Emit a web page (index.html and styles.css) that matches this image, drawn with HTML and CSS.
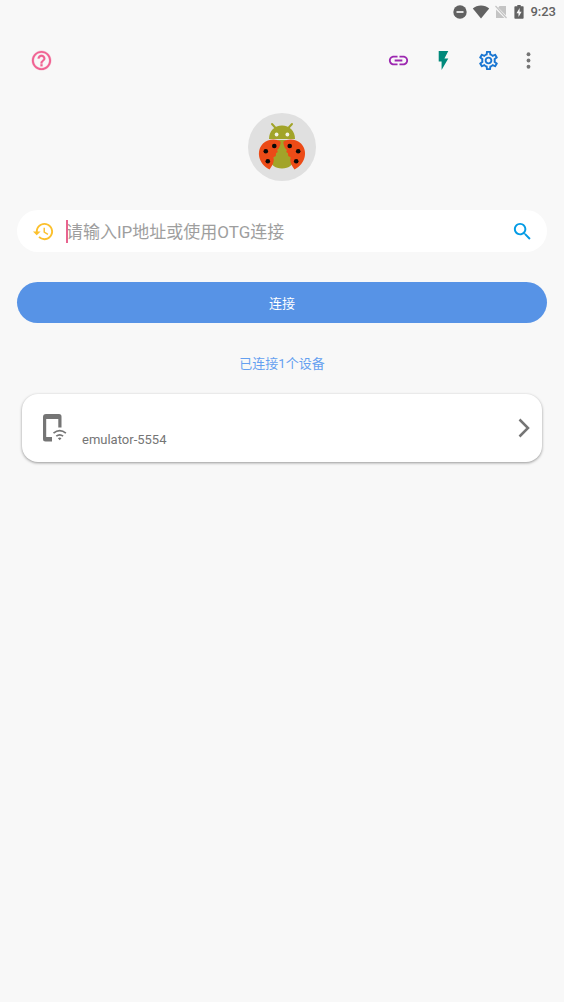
FILE: index.html
```html
<!DOCTYPE html>
<html lang="zh-CN">
<head>
<meta charset="utf-8">
<meta name="viewport" content="width=device-width, initial-scale=1">
<title>ADB</title>
<link rel="stylesheet" href="styles.css">
</head>
<body>
<div class="status-bar">
  <svg class="status-icon" width="14" height="14" viewBox="0 0 14 14" aria-hidden="true"><circle cx="7" cy="7" r="6.7" fill="#626262"/><path d="M3.5 7h7" stroke="#f7f7f7" stroke-width="1.700"/></svg>
  <svg class="status-icon" width="18" height="14" viewBox="0 0 18 14" aria-hidden="true"><path d="M9 13.600.8 3.400C3 1.500 5.800.5 9 .5s6 1 8.200 2.900z" fill="#626262"/></svg>
  <svg class="status-icon sim" width="12" height="14" viewBox="0 0 12 14" aria-hidden="true"><path d="M4.600 1H11v9.600L3.200 2.500zM1 4.500 9.500 13H1z" fill="#c4c4c4"/><path d="m.5 1 11 12" stroke="#c4c4c4" stroke-width="1.200"/></svg>
  <svg class="status-icon battery" width="10" height="14" viewBox="0 0 10 14" aria-hidden="true"><path d="M3.300 0h3.400v1.300H9q.6 0 .6.700v11q0 .8-.7.800H1.100q-.7 0-.7-.8V2q0-.7.7-.7h2.200z" fill="#626262"/><path d="M5.600 3 2.500 8.200h2V12l3.100-5.200h-2z" fill="#f7f7f7"/></svg>
  <time class="clock">9:23</time>
</div>

<header class="toolbar">
  <button class="icon-button help" type="button" aria-label="帮助">
    <svg class="icon" viewBox="0 0 24 24"><path d="M11 18h2v-2h-2v2zm1-16C6.480 2 2 6.480 2 12s4.480 10 10 10 10-4.480 10-10S17.520 2 12 2zm0 18c-4.410 0-8-3.590-8-8s3.590-8 8-8 8 3.590 8 8-3.590 8-8 8zm0-14c-2.210 0-4 1.790-4 4h2c0-1.100.9-2 2-2s2 .9 2 2c0 2-3 1.750-3 5h2c0-2.250 3-2.500 3-5 0-2.210-1.790-4-4-4z" stroke="currentColor" stroke-width=".3"/></svg>
  </button>
  <button class="icon-button link" type="button" aria-label="链接">
    <svg class="icon" viewBox="0 0 24 24"><path d="M3.900 12c0-1.710 1.390-3.100 3.100-3.100h4V7H7c-2.760 0-5 2.240-5 5s2.240 5 5 5h4v-1.900H7c-1.710 0-3.100-1.390-3.100-3.100zM8 13h8v-2H8v2zm9-6h-4v1.900h4c1.710 0 3.100 1.390 3.100 3.100s-1.390 3.100-3.100 3.100h-4V17h4c2.760 0 5-2.240 5-5s-2.240-5-5-5z"/></svg>
  </button>
  <button class="icon-button flash" type="button" aria-label="闪电">
    <svg class="icon" viewBox="0 0 24 24"><path d="M7 2v11h3v9l7-12h-4l4-8z"/></svg>
  </button>
  <button class="icon-button settings" type="button" aria-label="设置">
    <svg class="icon" viewBox="0 0 24 24"><path d="M19.430 12.980c.04-.32.07-.64.07-.98 0-.34-.03-.66-.07-.98l2.110-1.650c.19-.15.24-.42.12-.64l-2-3.460c-.09-.16-.26-.25-.44-.25-.06 0-.12.010-.17.030l-2.490 1c-.52-.4-1.080-.73-1.690-.98l-.38-2.650C14.460 2.180 14.250 2 14 2h-4c-.25 0-.46.180-.49.420l-.38 2.650c-.61.250-1.170.590-1.690.980l-2.490-1c-.06-.02-.12-.03-.18-.03-.17 0-.34.090-.43.250l-2 3.460c-.13.220-.07.490.12.640l2.110 1.650c-.04.320-.07.650-.07.980 0 .330.030.660.070.980l-2.110 1.650c-.19.150-.24.420-.12.640l2 3.460c.09.160.26.250.44.250.06 0 .12-.01.17-.03l2.490-1c.52.400 1.080.730 1.690.980l.38 2.650c.03.240.24.420.49.420h4c.25 0 .46-.18.49-.42l.38-2.650c.61-.25 1.170-.59 1.690-.98l2.490 1c.06.020.12.030.18.030.17 0 .34-.09.43-.25l2-3.460c.12-.22.070-.49-.12-.64l-2.110-1.650zm-1.980-1.710c.04.310.05.520.05.730 0 .210-.02.430-.05.730l-.14 1.130.89.700 1.080.840-.7 1.210-1.270-.51-1.040-.42-.9.680c-.43.320-.84.560-1.250.730l-1.060.430-.16 1.130-.2 1.350h-1.400l-.19-1.350-.16-1.130-1.060-.43c-.43-.18-.83-.41-1.230-.71l-.91-.7-1.060.430-1.270.510-.7-1.210 1.080-.84.89-.7-.14-1.130c-.03-.31-.05-.54-.05-.74s.02-.43.05-.73l.14-1.130-.89-.7-1.080-.84.700-1.210 1.270.510 1.040.420.900-.68c.43-.32.840-.56 1.250-.73l1.060-.43.160-1.130.200-1.350h1.390l.19 1.350.16 1.130 1.060.430c.43.180.830.410 1.230.710l.91.700 1.060-.43 1.270-.51.700 1.210-1.070.850-.89.700.14 1.130zM12 8c-2.210 0-4 1.790-4 4s1.790 4 4 4 4-1.790 4-4-1.790-4-4-4zm0 6c-1.100 0-2-.9-2-2s.9-2 2-2 2 .9 2 2-.9 2-2 2z"/></svg>
  </button>
  <button class="icon-button more" type="button" aria-label="更多">
    <svg class="icon" viewBox="0 0 24 24"><circle cx="12" cy="5.500" r="2"/><circle cx="12" cy="12" r="2"/><circle cx="12" cy="18.500" r="2"/></svg>
  </button>
</header>

<main class="content">
  <svg class="logo" viewBox="0 0 68 68" role="img" aria-label="瓢虫">
    <circle cx="34" cy="34" r="34" fill="#e0e0e0"/>
    <path d="m24 11 4.500 5m15.500-5-4.500 5" stroke="#a2a429" stroke-width="2" stroke-linecap="round"/>
    <path d="M21 26c0-8 5.500-13.500 13-13.500S47 18 47 26z" fill="#a2a429"/>
    <circle cx="28.600" cy="21.500" r="1.900" fill="#f4f4e6"/><circle cx="39.400" cy="21.500" r="1.900" fill="#f4f4e6"/>
    <path d="M30 27h8c1 4 8 13 8 18 0 6.500-5 10.500-12 10.500S22 51.500 22 45c0-5 7-14 8-18z" fill="#a2a429"/>
    <path id="wing" d="M32.500 28.500C28.500 25.500 20 25.500 15 30.500 8 37.500 10 50.500 21.500 56.500c2.500-3.500 4-6 4.300-9.500l-.4-2.800 2.400-1.200.2-2.700 1.800-1.300-.7-2 1.900-2c.8-2 2-4.500 1.500-6.500z" fill="#ec4b17"/>
    <use href="#wing" transform="matrix(-1 0 0 1 68 0)"/>
    <g fill="#080808"><circle cx="26.300" cy="33" r="2.300"/><circle cx="17.800" cy="38.200" r="2.300"/><circle cx="19.800" cy="48.300" r="2.300"/><circle cx="41.700" cy="33" r="2.300"/><circle cx="50.200" cy="38.200" r="2.300"/><circle cx="48.200" cy="48.300" r="2.300"/></g>
  </svg>

  <form class="connect-form">
    <div class="search">
      <button class="icon-button history" type="button" aria-label="历史记录">
        <svg class="icon" viewBox="0 0 24 24"><path d="M13 3c-4.970 0-9 4.030-9 9H1l3.890 3.890.07.140L9 12H6c0-3.870 3.130-7 7-7s7 3.130 7 7-3.130 7-7 7c-1.930 0-3.680-.79-4.940-2.060l-1.420 1.420C8.270 19.990 10.510 21 13 21c4.970 0 9-4.030 9-9s-4.030-9-9-9zm-1 5v5l4.280 2.540.72-1.210-3.500-2.080V8z"/></svg>
      </button>
      <div class="field">
        <input class="address" type="text" aria-label="IP地址" placeholder="请输入IP地址或使用OTG连接">
        <span class="caret"></span>
      </div>
      <button class="icon-button find" type="button" aria-label="搜索">
        <svg class="icon" viewBox="0 0 24 24"><path d="M15.500 14h-.79l-.28-.27C15.410 12.590 16 11.110 16 9.500 16 5.910 13.090 3 9.500 3S3 5.910 3 9.500 5.910 16 9.500 16c1.610 0 3.090-.59 4.230-1.570l.27.280v.79l5 4.990L20.490 19l-4.990-5zm-6 0C7.010 14 5 11.990 5 9.500S7.010 5 9.500 5 14 7.010 14 9.500 11.990 14 9.500 14z"/></svg>
      </button>
    </div>
    <button class="connect" type="submit">连接</button>
  </form>

  <p class="summary">已连接1个设备</p>

  <button class="device" type="button">
    <svg class="device-icon" width="24" height="28" viewBox="0 0 24 28" fill="none" stroke="#757575" aria-hidden="true"><path d="M3 0h13q2.500 0 2.500 2.500V13.500h-3.200V5H3.200v18H9v4.500H2.500Q0 27.500 0 25V3Q0 0 3 0z" fill="#757575" stroke="none"/><path d="M10.500 19.200q6.200-5 12.400 0M13.300 22.200q3.400-2.700 6.800 0" stroke-width="1.700"/><path d="m14.900 24.300 1.800 2 1.800-2q-1.800-1.400-3.600 0z" fill="#757575" stroke="none"/></svg>
    <span class="device-name">emulator-5554</span>
    <svg class="chevron" width="12" height="20" viewBox="0 0 12 20" fill="none" aria-hidden="true"><path d="m1.500 1.500 8.500 8.500-8.500 8.500" stroke="#757575" stroke-width="2.500"/></svg>
  </button>
</main>
</body>
</html>
```
FILE: styles.css
```css
* {
  box-sizing: border-box;
}

body {
  margin: 0;
  min-height: 100vh;
  background: #f8f8f8;
  color: #757575;
  font-family: Roboto, "Noto Sans CJK SC", sans-serif;
}

button,
input {
  border: 0;
  padding: 0;
  background: none;
  color: inherit;
  font: inherit;
}

.status-bar {
  display: flex;
  align-items: center;
  justify-content: flex-end;
  height: 24px;
  padding-right: 8px;
}

.status-icon {
  margin-right: 5px;
}

.sim {
  margin-right: 7px;
}

.battery {
  margin-right: 6px;
}

.clock {
  color: #626262;
  font-size: 13px;
  font-weight: 500;
  line-height: 24px;
}

.toolbar {
  display: flex;
  align-items: center;
  height: 72px;
  padding: 0 24px 0 29px;
}

.icon-button {
  display: flex;
  flex: none;
  align-items: center;
  justify-content: center;
  width: 24px;
  height: 24px;
}

.icon {
  width: 23px;
  height: 23px;
  fill: currentColor;
}

.help {
  margin-right: auto;
  color: #f06292;
}

.link {
  color: #9c27b0;
}

.flash {
  margin-left: 21px;
  color: #00897b;
}

.settings {
  margin-left: 21px;
  color: #1976d2;
}

.more {
  margin-left: 16px;
}

.content {
  display: flex;
  flex-direction: column;
  padding: 17px;
}

.logo {
  align-self: center;
  width: 68px;
  height: 68px;
}

.connect-form {
  display: grid;
  gap: 30px;
  margin-top: 29px;
}

.search {
  display: flex;
  align-items: center;
  height: 42px;
  padding: 0 13px 0 14px;
  border-radius: 21px;
  background: #fff;
}

.history {
  color: #fbc02d;
}

.field {
  position: relative;
  flex: 1;
  margin-left: 11px;
}

.address {
  display: block;
  width: 100%;
  height: 42px;
  padding-top: 2px;
  outline: 0;
  font-size: 17px;
}

.address::placeholder {
  color: #9e9e9e;
  opacity: 1;
}

.caret {
  position: absolute;
  top: 10px;
  left: 0;
  width: 2px;
  height: 23px;
  background: #e8648f;
}

.find {
  color: #039be5;
}

.connect {
  height: 41px;
  padding-bottom: 1px;
  border-radius: 21px;
  background: #5793e6;
  color: #fff;
  font-size: 13px;
}

.summary {
  margin: 31px 0 20px;
  color: #64a0f0;
  font-size: 13px;
  line-height: 20px;
  text-align: center;
}

.device {
  display: flex;
  align-items: center;
  height: 68px;
  margin: 0 5px;
  padding: 0 12px 0 21px;
  border-radius: 16px;
  background: #fff;
  box-shadow: 0 1px 3px rgba(0, 0, 0, 0.4);
}

.device-name {
  margin: 23px auto 0 15px;
  font-size: 13px;
  line-height: 20px;
}
```
